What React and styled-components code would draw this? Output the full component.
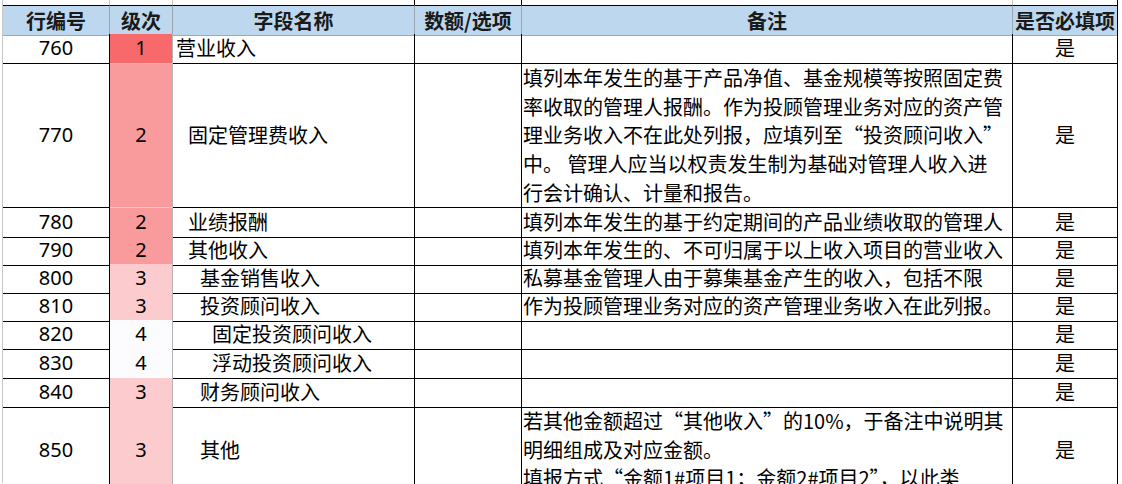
import React from "react";
import styled, { createGlobalStyle } from "styled-components";

// column widths include each cell's right border
const COLS = "107px 63px 242px 107px 491px 105px";

const levelColors = {
  1: "#F8696B",
  2: "#F99A9C",
  3: "#FBCBCE",
  4: "#FCFCFF",
};

const GlobalStyle = createGlobalStyle`
  html, body {
    margin: 0;
    padding: 0;
    background: #ffffff;
  }
  body {
    font-family: "Noto Sans CJK SC", "Noto Sans", sans-serif;
    color: #000;
  }
`;

const Sheet = styled.div`
  width: 1122px;
  height: 484px;
  overflow: hidden;
  padding-left: 2px;
  box-sizing: border-box;
`;

const Row = styled.div`
  display: grid;
  grid-template-columns: ${COLS};
  height: ${(p) => p.h}px;
  border-left: 1px solid #c6c6c6;
  width: max-content;
`;

const Cell = styled.div`
  box-sizing: border-box;
  display: flex;
  align-items: center;
  justify-content: ${(p) => p.align || "flex-start"};
  border-right: 1px solid ${(p) => p.edge || "#000"};
  border-bottom: 1px solid #000;
  font-size: 20px;
  line-height: 28.7px;
  white-space: nowrap;
  min-width: 0;
`;

// row numbers: latin digits first, like the sheet's UI font
const NumCell = styled(Cell)`
  justify-content: center;
  font-family: "Noto Sans", "Noto Sans CJK SC", sans-serif;
`;

const StubCell = styled.div`
  box-sizing: border-box;
  border-right: 1px solid ${(p) => p.edge};
`;

const HeadCell = styled.div`
  box-sizing: border-box;
  display: flex;
  align-items: center;
  justify-content: center;
  background: #bdd7ee;
  border-top: 1px solid #000;
  border-bottom: 1px solid #9fa9b3;
  border-right: 1px solid ${(p) => p.edge || "#9aa6b2"};
  font-size: 20px;
  font-weight: 700;
  color: #1a1a1a;
  white-space: nowrap;
  overflow: visible;
`;

const LevelCell = styled(NumCell)`
  background: ${(p) => levelColors[p.level]};
  border-right: 1px solid #b4b4b4;
  border-bottom: 1px solid rgba(255, 255, 255, 0.45);
`;

const NameCell = styled(Cell)`
  padding-left: ${(p) => 3 + (p.level - 1) * 12}px;
`;

const NoteCell = styled(Cell)`
  flex-direction: column;
  align-items: flex-start;
  justify-content: center;
  padding-left: 1px;
`;

const NoteLine = styled.div`
  height: 28.7px;
  flex-shrink: 0;
`;

const rows = [
  { id: "760", level: 1, name: "营业收入", h: 30, note: [] },
  {
    id: "770",
    level: 2,
    name: "固定管理费收入",
    h: 144,
    note: [
      "填列本年发生的基于产品净值、基金规模等按照固定费",
      "率收取的管理人报酬。作为投顾管理业务对应的资产管",
      "理业务收入不在此处列报，应填列至“投资顾问收入”",
      "中。 管理人应当以权责发生制为基础对管理人收入进",
      "行会计确认、计量和报告。",
    ],
  },
  {
    id: "780",
    level: 2,
    name: "业绩报酬",
    h: 28,
    note: ["填列本年发生的基于约定期间的产品业绩收取的管理人"],
  },
  {
    id: "790",
    level: 2,
    name: "其他收入",
    h: 28,
    note: ["填列本年发生的、不可归属于以上收入项目的营业收入"],
  },
  {
    id: "800",
    level: 3,
    name: "基金销售收入",
    h: 28,
    note: ["私募基金管理人由于募集基金产生的收入，包括不限"],
  },
  {
    id: "810",
    level: 3,
    name: "投资顾问收入",
    h: 28,
    note: ["作为投顾管理业务对应的资产管理业务收入在此列报。"],
  },
  { id: "820", level: 4, name: "固定投资顾问收入", h: 29, note: [] },
  { id: "830", level: 4, name: "浮动投资顾问收入", h: 29, note: [] },
  { id: "840", level: 3, name: "财务顾问收入", h: 29, note: [] },
  {
    id: "850",
    level: 3,
    name: "其他",
    h: 76,
    note: [
      "若其他金额超过“其他收入”的10%，于备注中说明其",
      "明细组成及对应金额。",
      "填报方式“金额1#项目1；金额2#项目2”，以此类",
    ],
  },
];

const headers = ["行编号", "级次", "字段名称", "数额/选项", "备注", "是否必填项"];
const stubEdges = ["#c6c6c6", "#c6c6c6", "#000", "#000", "#c6c6c6", "#000"];

export default function App() {
  return (
    <>
      <GlobalStyle />
      <Sheet>
        <Row h={5}>
          {stubEdges.map((edge, i) => (
            <StubCell key={i} edge={edge} />
          ))}
        </Row>
        <Row h={29}>
          {headers.map((label, i) => (
            <HeadCell key={label} edge={i === 5 ? "#000" : undefined}>
              {label}
            </HeadCell>
          ))}
        </Row>
        {rows.map((r) => (
          <Row key={r.id} h={r.h}>
            <NumCell>{r.id}</NumCell>
            <LevelCell level={r.level}>{r.level}</LevelCell>
            <NameCell level={r.level}>{r.name}</NameCell>
            <Cell />
            <NoteCell>
              {r.note.map((line) => (
                <NoteLine key={line}>{line}</NoteLine>
              ))}
            </NoteCell>
            <Cell align="center">是</Cell>
          </Row>
        ))}
      </Sheet>
    </>
  );
}
